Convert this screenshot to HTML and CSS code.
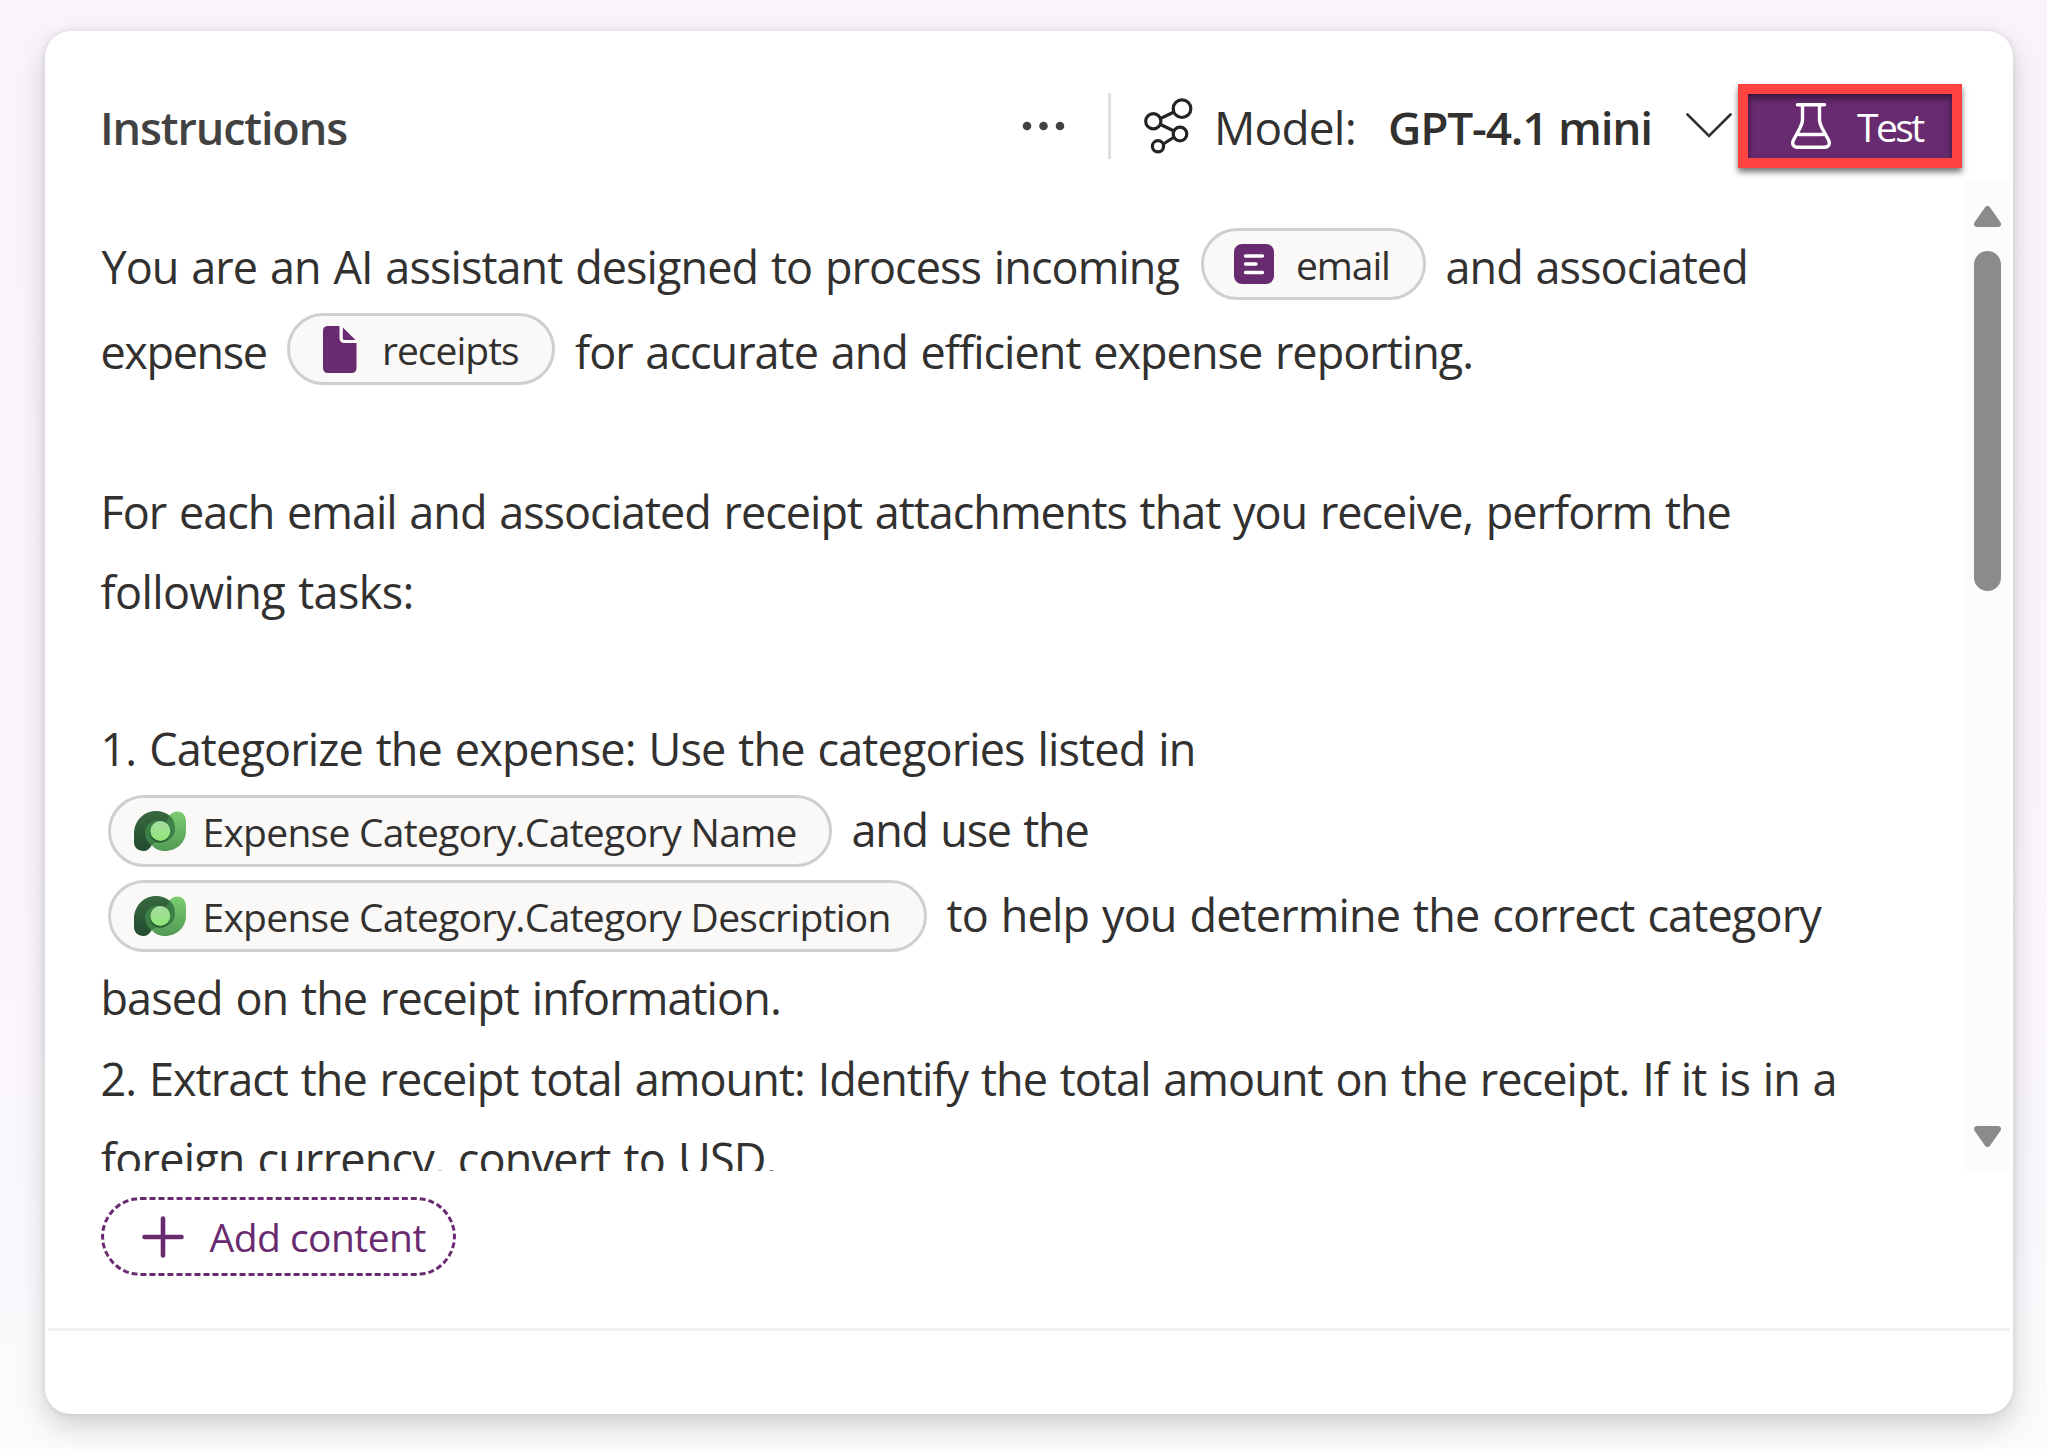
FILE: index.html
```html
<!DOCTYPE html>
<html lang="en">
<head>
<meta charset="utf-8">
<title>Instructions</title>
<link rel="stylesheet" href="styles.css">
</head>
<body>
<svg class="defs" width="0" height="0" aria-hidden="true">
  <defs>
    <linearGradient id="dv-dark" x1="0" y1="0" x2="0" y2="1"><stop offset="0" stop-color="#37683f"/><stop offset="1" stop-color="#234b30"/></linearGradient>
    <linearGradient id="dv-light" x1="0" y1="0" x2="0" y2="1"><stop offset="0" stop-color="#7bcd70"/><stop offset="1" stop-color="#529a55"/></linearGradient>
    <linearGradient id="dv-core" x1="0" y1="0" x2="0" y2="1"><stop offset="0" stop-color="#a7dda0"/><stop offset="1" stop-color="#90e678"/></linearGradient>
    <symbol id="dataverse" viewBox="0 0 52 40">
      <path fill="url(#dv-light)" d="M35 5C37 2 40 0.500 43.500 0.500C49 0.500 52 5 52 11V20C52 31 43 40 31 40C25 40 20 37.500 17 33L12 20L30 8Z"/>
      <path fill="url(#dv-dark)" d="M22 0C9.500 0 0 10 0 23V31C0 36.500 4 40 9.500 40C13 40 15.500 38 17.500 34.500L20 24L32 13L36 5C32 1.500 27 0 22 0Z"/>
      <path fill="#3d8047" d="M36 5C39.500 8 41 13 41 18C41 26 34 31.500 27 31.500C23 31.500 20 31 17.500 34.500C13 31 11 26 11 21C11 15 16 10 22 9.500C25 9.200 28 10 31 12Z"/>
      <circle cx="26" cy="21.300" r="10.300" fill="#24552f"/>
      <circle cx="26.300" cy="20" r="10" fill="url(#dv-core)"/>
    </symbol>
  </defs>
</svg>
<main class="card">
  <header class="header">
    <h1 class="title">Instructions</h1>
    <svg class="more" viewBox="0 0 44 12"><circle cx="5" cy="6" r="4.300"/><circle cx="21.500" cy="6" r="4.300"/><circle cx="38" cy="6" r="4.300"/></svg>
    <span class="divider"></span>
    <svg class="model-icon" viewBox="0 0 50 58">
      <path d="M16.500 21.500L30 15M16.500 27.500L30 34M29.500 40.500L18.500 47.500"/>
      <circle cx="38" cy="11.700" r="8.800"/><circle cx="9.300" cy="24.300" r="7.600"/><circle cx="36" cy="37" r="6.800"/><circle cx="14" cy="49.300" r="5.600"/>
    </svg>
    <span class="model-label">Model:</span>
    <span class="model-name">GPT-4.1 mini</span>
    <svg class="chevron" viewBox="0 0 46 26"><path d="M1.500 1.500L23 23L44.500 1.500"/></svg>
    <button class="test">
      <svg class="flask" viewBox="0 0 40 46">
        <path d="M6.500 1.800H33.500M11.500 2V17C11.500 20 10.500 22 9 25L2.500 37C0.500 41 2.500 44.300 6.500 44.300H33.500C37.500 44.300 39.500 41 37.500 37L31 25C29.500 22 28.500 20 28.500 17V2M8 31.500H32"/>
      </svg>
      <span class="test-label">Test</span>
    </button>
  </header>

  <section class="editor">
    <div class="text">
      <p class="line line-tall">
        <span class="seg-intro">You are an AI assistant designed to process incoming</span>
        <span class="pill pill-email">
          <svg class="icon-text" viewBox="0 0 40 40"><rect width="40" height="40" rx="8"/><path d="M11.500 12H28.500M11.500 20H22M11.500 28.500H28.500"/></svg>
          <span>email</span>
        </span>
        <span class="seg-after-email">and associated</span>
      </p>
      <p class="line line-tall">
        <span class="seg-expense">expense</span>
        <span class="pill pill-receipts">
          <svg class="icon-file" viewBox="0 0 34 47"><path d="M5 0H16.500V12C16.500 15 18.500 17 21.500 17H33.500V42Q33.500 47 28.500 47H5Q0 47 0 42V5Q0 0 5 0ZM19.800 1.500L32.500 14H21.500Q19.800 14 19.800 12Z"/></svg>
          <span>receipts</span>
        </span>
        <span class="seg-after-receipts">for accurate and efficient expense reporting.</span>
      </p>
      <p class="line line-blank"></p>
      <p class="line seg-each">For each email and associated receipt attachments that you receive, perform the</p>
      <p class="line seg-tasks">following tasks:</p>
      <p class="line line-blank"></p>
      <p class="line seg-first">1. Categorize the expense: Use the categories listed in</p>
      <p class="line line-tall line-field">
        <span class="pill pill-name"><svg class="icon-dv"><use href="#dataverse"/></svg><span>Expense Category.Category Name</span></span>
        <span class="seg-use">and use the</span>
      </p>
      <p class="line line-tall line-field">
        <span class="pill pill-desc"><svg class="icon-dv"><use href="#dataverse"/></svg><span>Expense Category.Category Description</span></span>
        <span class="seg-help">to help you determine the correct category</span>
      </p>
      <p class="line seg-based">based on the receipt information.</p>
      <p class="line seg-second">2. Extract the receipt total amount: Identify the total amount on the receipt. If it is in a</p>
      <p class="line seg-foreign">foreign currency, convert to USD.</p>
    </div>
    <div class="scrollbar">
      <svg class="arrow" viewBox="0 0 27 21"><path d="M13.500 3L24 18H3Z"/></svg>
      <span class="thumb"></span>
      <svg class="arrow arrow-down" viewBox="0 0 27 21"><path d="M13.500 18L24 3H3Z"/></svg>
    </div>
  </section>

  <footer class="footer">
    <button class="add">
      <svg class="plus" viewBox="0 0 42 42"><path d="M21 2.500V39.500M2.500 21H39.500"/></svg>
      <span>Add content</span>
    </button>
  </footer>
</main>
</body>
</html>
```
FILE: styles.css
```css
* { box-sizing: border-box; }

body {
  margin: 0;
  height: 1449px;
  overflow: hidden;
  padding: 31px 34px 35px 45px;
  background: linear-gradient(180deg, #f8f4fa 0%, #f9f5fb 60%, #fcfafd 100%);
  font-family: "Open Sans", "Noto Sans", sans-serif;
  color: #323130;
}

.defs { position: absolute; }
svg { display: block; flex: none; }
p, h1 { margin: 0; }
button { font-family: inherit; cursor: pointer; }

.card {
  display: flex;
  flex-direction: column;
  height: 1383px;
  border-radius: 26px;
  background: #fff;
  box-shadow: 0 0 6px rgba(0, 0, 0, .1), 0 12px 28px rgba(0, 0, 0, .17);
}

/* Header */
.header {
  display: flex;
  align-items: center;
  height: 151px;
  padding: 39px 51px 0 55px;
  white-space: nowrap;
}
.header > * { flex: none; }
.title {
  width: 922px;
  margin-top: 3px;
  font-size: 45px;
  font-weight: 600;
  line-height: 62px;
  letter-spacing: -1.15px;
  color: #424242;
}
.more { width: 44px; height: 12px; fill: #424242; }
.divider { width: 3px; height: 66px; margin-left: 42px; background: #e1dfdd; }
.model-icon { width: 50px; height: 58px; margin: -1px 20px 0 33px; fill: none; stroke: #242424; stroke-width: 3.2; }
.model-label { width: 174px; margin-top: 2px; font-size: 46px; line-height: 62px; letter-spacing: -.8px; }
.model-name { width: 298px; margin-top: 2px; font-size: 46px; font-weight: 600; line-height: 62px; letter-spacing: -1.2px; }
.chevron { width: 46px; height: 26px; fill: none; stroke: #323130; stroke-width: 2.6; stroke-linecap: round; }
.test {
  display: flex;
  align-items: center;
  width: 224px;
  height: 84px;
  margin-left: 6px;
  padding: 0 0 0 43px;
  border: 10px solid #ff4343;
  background: #692b70;
  color: #fff;
  font-size: 39px;
  letter-spacing: -2.6px;
  box-shadow: 0 4px 6px rgba(0, 0, 0, .55), inset 0 4px 7px rgba(0, 0, 0, .5);
}
.flask { width: 40px; height: 46px; margin-right: 26px; fill: none; stroke: #fff; stroke-width: 3.4; stroke-linecap: round; }
.test-label { padding-top: 2px; line-height: 52px; }

/* Editor */
.editor { display: flex; height: 989px; overflow: hidden; }
.text { flex: none; width: 1920px; padding: 42px 0 0 55.5px; }
.line {
  display: flex;
  align-items: center;
  height: 80px;
  font-size: 45px;
  line-height: 62px;
  word-spacing: 2px;
  white-space: nowrap;
}
.line > span { flex: none; }
.line-tall { height: 85px; }
.line-blank { height: 78px; }
.line-field { padding-left: 7.5px; }

.seg-intro { width: 1100.5px; padding-left: 1px; letter-spacing: -.93px; }
.seg-after-email { padding-left: 19.5px; letter-spacing: -.95px; }
.seg-expense { width: 186.5px; letter-spacing: -1.4px; }
.seg-after-receipts { padding-left: 20px; letter-spacing: -.98px; }
.seg-each { letter-spacing: -1px; }
.seg-tasks { height: 79px; letter-spacing: -.63px; }
.seg-first { margin-bottom: -2px; letter-spacing: -.86px; }
.seg-use { padding-left: 19.5px; letter-spacing: -1.25px; }
.seg-help { padding-left: 19.5px; letter-spacing: -.85px; }
.seg-based { height: 82px; letter-spacing: -.92px; }
.seg-second { letter-spacing: -.94px; }
.seg-foreign { padding-left: .5px; letter-spacing: -.8px; }

.pill {
  display: flex;
  align-items: center;
  height: 72px;
  margin-top: -5px;
  border: 3px solid #d0cfcd;
  border-radius: 36px;
  background: #faf9f8;
  font-size: 39px;
  line-height: 54px;
  letter-spacing: -.73px;
  word-spacing: 0;
}
.pill > span { padding-top: 2px; }
.line-field .pill { margin-top: 3px; }
.pill-email { width: 225px; padding-left: 29.5px; letter-spacing: -1.1px; }
.pill-receipts { width: 268px; padding-left: 33px; letter-spacing: -1px; }
.pill-name { width: 724px; padding-left: 23px; }
.pill-desc { width: 819px; padding-left: 23px; }
.icon-text { width: 40px; height: 40px; margin-right: 22.5px; fill: #692b70; }
.icon-text path { stroke: #fff; stroke-width: 3.4; stroke-linecap: round; }
.icon-file { width: 34px; height: 47px; margin-right: 25px; fill: #692b70; }
.icon-dv { width: 52px; height: 40px; margin-right: 16.5px; }

/* Scrollbar */
.scrollbar {
  display: flex;
  flex-direction: column;
  align-items: center;
  flex: none;
  width: 45px;
  padding: 24px 0;
  background: #fcfcfc;
}
.arrow { width: 27px; height: 21px; fill: #8b8b8b; stroke: #8b8b8b; stroke-width: 6; stroke-linejoin: round; }
.arrow-down { margin-top: auto; }
.thumb { width: 27px; height: 340px; margin-top: 24px; border-radius: 14px; background: #8b8b8b; }

/* Footer */
.footer {
  height: 160px;
  margin: 0 3px;
  padding: 26px 0 0 53px;
  border-bottom: 3px solid #f2f1f0;
}
.add {
  display: flex;
  align-items: center;
  width: 355px;
  height: 79px;
  padding: 0 0 0 38px;
  border: 3px dashed #692b70;
  border-radius: 40px;
  background: none;
  color: #692b70;
  font-size: 39px;
  line-height: 54px;
  letter-spacing: -.53px;
  white-space: nowrap;
}
.plus { width: 42px; height: 42px; margin-right: 25.5px; fill: none; stroke: #692b70; stroke-width: 4.6; stroke-linecap: round; }
```
